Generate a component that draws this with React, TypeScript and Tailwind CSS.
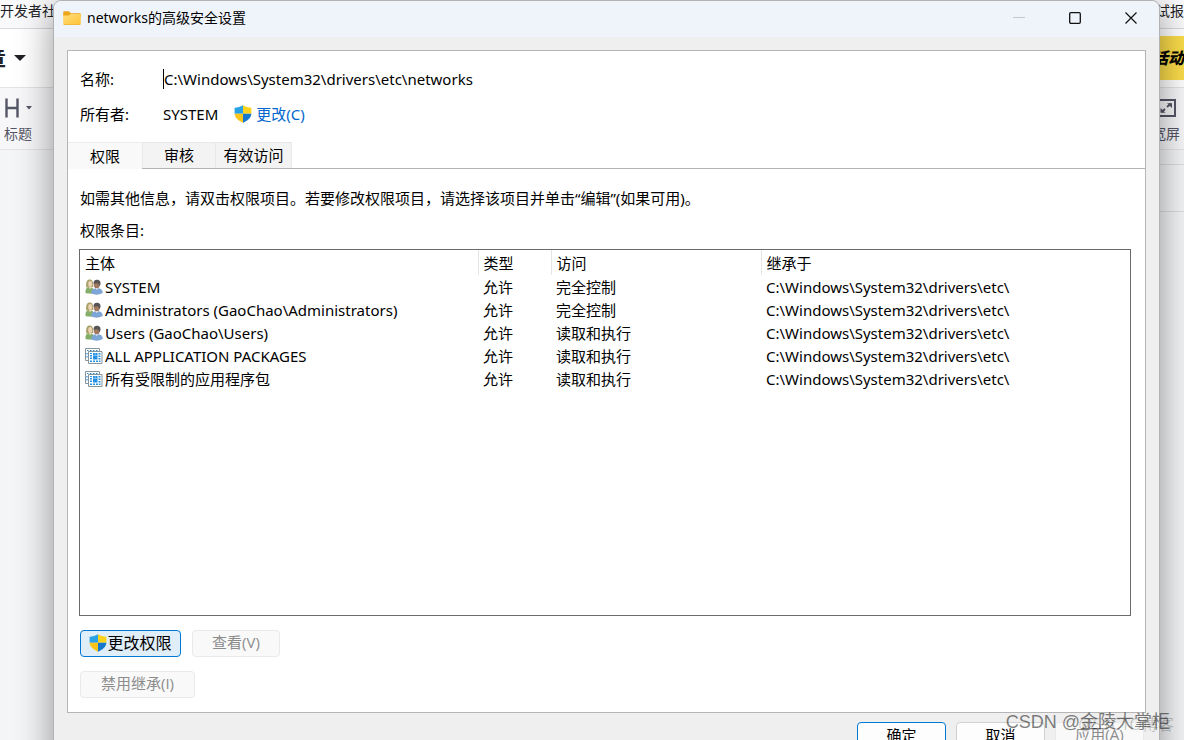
import React from "react";

const ui = "font-['Noto_Sans','Noto_Sans_CJK_SC',sans-serif]";

function Shield() {
  return (
    <svg width="18" height="18" viewBox="0 0 18 18" aria-hidden="true" className="shrink-0">
      <path d="M9 0.3 C6.4 2 3.5 2.7 0.6 2.7 L0.6 8.8 L9 8.8 Z" fill="#2aa3e6" />
      <path d="M9 0.3 C11.6 2 14.5 2.7 17.4 2.7 L17.4 8.8 L9 8.8 Z" fill="#fcd31c" />
      <path d="M0.6 8.8 C1 13 4.5 15.8 9 17.8 L9 8.8 Z" fill="#fdc51a" />
      <path d="M17.4 8.8 C17 13 13.5 15.8 9 17.8 L9 8.8 Z" fill="#1678cf" />
    </svg>
  );
}

function Folder() {
  return (
    <svg width="18" height="14" viewBox="0 0 18 14" aria-hidden="true">
      <defs>
        <linearGradient id="folder" x1="0" y1="0" x2="1" y2="1">
          <stop offset="0" stopColor="#ffdd7a" />
          <stop offset="1" stopColor="#fdc437" />
        </linearGradient>
      </defs>
      <path d="M1.3 0.2h4.6l2 2h8.8q1.1 0 1.1 1.2V6H0.2V1.4Q0.2 0.2 1.3 0.2Z" fill="#eda51c" />
      <path d="M0.2 4.6h5.6l2-1.6h9q1 0 1 1v8.6q0 1.2-1.1 1.2H1.3q-1.1 0-1.1-1.2Z" fill="url(#folder)" />
      <path d="M0.4 13h17.2q-.2.8-1 .8H1.4q-.8 0-1-.8Z" fill="#eeb02c" />
    </svg>
  );
}

function Group() {
  return (
    <svg width="18" height="16" viewBox="0 0 18 16" aria-hidden="true" className="shrink-0">
      <path d="M0.5 14C0.200 10.200 1.600 8 4.600 8S9 10 9 14Q4.600 15.200 0.500 14Z" fill="#82ae68" />
      <path d="M1.200 8.500C0.700 3 2 0.400 4.700 0.400S8.700 3 8.200 8Z" fill="#aaa06a" />
      <ellipse cx="5.200" cy="5" rx="2" ry="3" fill="#ecd4b4" />
      <path d="M3.600 8l1.400 2.600L6.600 8Z" fill="#ecd4b4" />
      <path d="M6.300 14.500C6.300 10.400 8.400 9.200 12 9.200s5.900 1.400 5.700 4.800Q12 17 6.300 14.500Z" fill="#7da5d6" />
      <ellipse cx="11.800" cy="5.400" rx="2.900" ry="4" fill="#a0785f" />
      <path d="M8.600 5C8.200 2.200 9.600 0.700 12 0.700s4 1.500 3.400 4.900l-.9 2C14.200 4.200 12 3.600 8.600 5Z" fill="#585354" />
      <path d="M10.200 9.200l1.600 1.800 1.600-1.800Z" fill="#e7eef6" />
    </svg>
  );
}

function Package() {
  return (
    <svg width="18" height="16" viewBox="0 0 18 16" aria-hidden="true" className="shrink-0">
      <path d="M0.5 0.5h14v12h-14Z" fill="#fff" stroke="#87949c" />
      <path d="M2 2.500h1.500M5 2.500h1.500M8 2.500h1.500M11 2.500h1.500M2 5v1.500M2 8v1.500" stroke="#2b8bd9" strokeWidth="1.200" />
      <path d="M3.500 3.500h13.500v12h-13.500Z" fill="#fff" stroke="#87949c" />
      <path d="M5 5h2v1H5ZM5 7h2v1.500H5ZM5 9.500h2V11H5ZM5 12.500h2V14H5ZM8 5h4.500v6.500H8ZM13.500 5h2v1.500h-2ZM13.500 7.500h2V9h-2ZM13.500 10h2v1.500h-2ZM8 12.500h2V14H8ZM11 12.500h2V14h-2ZM14 12.500h1.500V14H14Z" fill="#2490e4" />
      <path d="M10.200 5v2.500H8M10.200 7.500h2.300" stroke="#b8dcf7" strokeWidth="0.600" fill="none" />
    </svg>
  );
}

const entries = [
  { name: "SYSTEM", group: true, access: "完全控制" },
  { name: "Administrators (GaoChao\\Administrators)", group: true, access: "完全控制" },
  { name: "Users (GaoChao\\Users)", group: true, access: "读取和执行" },
  { name: "ALL APPLICATION PACKAGES", group: false, access: "读取和执行" },
  { name: "所有受限制的应用程序包", group: false, access: "读取和执行" },
];

function EditorPage() {
  return (
    <div className="flex min-h-screen flex-col bg-[#f4f5f7] text-[#222226]">
      <div className="flex h-[29px] items-center justify-between overflow-hidden border-b border-[#d9d9dc] bg-[#fafafc] pb-1.5 text-sm">
        <span>开发者社</span>
        <span>试报</span>
      </div>
      <div className="flex h-[58px] items-center justify-between overflow-hidden bg-white">
        <div className="-ml-4 flex items-center gap-2">
          <span className="text-[22px] font-bold">章</span>
          <svg width="12" height="6" viewBox="0 0 12 6" aria-hidden="true"><path d="M0 0h12L6 6Z" fill="#222226" /></svg>
        </div>
        <div className="flex h-11 w-11 items-center justify-end bg-[#fbdc4a] text-base font-black italic text-black">活动</div>
      </div>
      <div className="flex h-[63px] items-center justify-between border-y border-[#e4e4e8] bg-[#f7f7f9] text-sm text-[#555666]">
        <div className="flex flex-col gap-1.5 pl-1 pt-1">
          <div className="flex items-center gap-1.5">
            <svg width="16" height="20" viewBox="0 0 16 20" aria-hidden="true"><path d="M2.500 0.500v19M13.500 0.500v19M2.500 10h11" stroke="#555666" strokeWidth="2.400" fill="none" /></svg>
            <svg width="6" height="4" viewBox="0 0 6 4" aria-hidden="true"><path d="M0 0h6L3 3.500Z" fill="#555666" /></svg>
          </div>
          <span>标题</span>
        </div>
        <div className="flex flex-col items-end gap-1.5 pr-1 pt-1">
          <svg width="24" height="20" viewBox="0 0 24 20" aria-hidden="true" fill="none" stroke="#555666" strokeWidth="2">
            <path d="M1 2h18v16H1Z" />
            <path d="M11 9l4-3.500M9 11l-3.500 3" />
            <path d="M11 5.300h5v4.700ZM4.500 10v4.700h5Z" fill="#555666" stroke="none" />
          </svg>
          <span>宽屏</span>
        </div>
      </div>
      <div className="ml-auto h-[15px] w-1/2 border-b border-[#dcdde0]" />
      <div className="ml-auto h-[47px] w-1/2 border-b border-[#dcdde0]" />
    </div>
  );
}

const disabledButton = "h-[27px] rounded-[4px] border border-[#e9e9e9] bg-[#f9f9f9] pb-0.5 font-['Open_Sans','Noto_Sans_CJK_SC',sans-serif] text-[15px] leading-none text-[#8c8c8c]";

export default function App() {
  return (
    <div className={`relative h-screen overflow-hidden ${ui}`}>
      <EditorPage />
      <main className="absolute left-[53px] right-[24px] top-0 flex min-h-[780px] flex-col rounded-t-lg border border-[#b2b2b4] bg-[#efefef] text-[15px] leading-5 text-black shadow-[0_8px_36px_rgba(0,0,0,0.42)]">
        <header className="flex h-9 items-center rounded-t-lg bg-[#eff3fa] pb-0.5 pl-[9px]">
          <Folder />
          <h1 className="ml-1.5 text-sm">networks的高级安全设置</h1>
          <div className="ml-auto flex h-full">
            <button aria-label="最小化" disabled className="grid w-14 place-items-center">
              <svg width="12" height="12" viewBox="0 0 12 12"><path d="M0 5.500h12" stroke="#c3c6cb" /></svg>
            </button>
            <button aria-label="最大化" className="grid w-14 place-items-center">
              <svg width="12" height="12" viewBox="0 0 12 12"><rect x="0.700" y="0.700" width="10.600" height="10.600" rx="1.200" fill="none" stroke="#111" strokeWidth="1.300" /></svg>
            </button>
            <button aria-label="关闭" className="grid w-14 place-items-center">
              <svg width="12" height="12" viewBox="0 0 12 12"><path d="M0.500 0.500l11 11M11.500 0.500l-11 11" stroke="#111" strokeWidth="1.200" /></svg>
            </button>
          </div>
        </header>

        <section className="mx-[13px] mt-[13px] border border-[#b5b5b5] bg-white">
          <dl className="grid grid-cols-[83px_1fr] gap-y-[15px] pl-3 pt-[18px]">
            <dt>名称:</dt>
            <dd className="border-l border-black">C:\Windows\System32\drivers\etc\networks</dd>
            <dt>所有者:</dt>
            <dd className="flex items-center">
              SYSTEM
              <a href="#change" className="ml-4 flex items-center gap-1 text-[#0066cc]"><Shield />更改(C)</a>
            </dd>
          </dl>

          <div role="tablist" className="mt-[18px] flex h-[27px] border-b border-[#b5b5b5]">
            <button role="tab" aria-selected="true" className="-mb-px w-[74px] border-t border-[#ececec] bg-[#f9f9f9]">权限</button>
            <button role="tab" aria-selected="false" className="w-[74px] border border-b-0 border-[#e8e8e8] bg-[#f3f3f3] pb-0.5">审核</button>
            <button role="tab" aria-selected="false" className="w-[76px] border border-b-0 border-l-0 border-[#e8e8e8] bg-[#f3f3f3] pb-0.5">有效访问</button>
          </div>

          <div className="pb-[14px] pl-[11px] pr-[14px] pt-[19px]">
            <p className="pl-px">如需其他信息，请双击权限项目。若要修改权限项目，请选择该项目并单击“编辑”(如果可用)。</p>
            <p className="mt-3 pl-px">权限条目:</p>
            <div className="mt-[9px] min-h-[367px] border border-[#6a6a6a]">
              <table className="w-full table-fixed border-collapse text-left">
                <colgroup>
                  <col className="w-[398px]" />
                  <col className="w-[73px]" />
                  <col className="w-[210px]" />
                  <col />
                </colgroup>
                <thead>
                  <tr className="h-[25px]">
                    <th className="border-r border-[#e5e5e5] pl-[5px] font-normal">主体</th>
                    <th className="border-r border-[#e5e5e5] pl-[5px] font-normal">类型</th>
                    <th className="border-r border-[#e5e5e5] pl-[5px] font-normal">访问</th>
                    <th className="pl-[5px] font-normal">继承于</th>
                  </tr>
                </thead>
                <tbody>
                  {entries.map((e) => (
                    <tr key={e.name} className="h-[23px]">
                      <td className="pl-[5px]"><span className="flex items-center gap-0.5">{e.group ? <Group /> : <Package />}{e.name}</span></td>
                      <td className="pl-[5px]">允许</td>
                      <td className="pl-[5px]">{e.access}</td>
                      <td className="pl-[5px]">C:\Windows\System32\drivers\etc\</td>
                    </tr>
                  ))}
                </tbody>
              </table>
            </div>
            <div className="mt-[14px] flex gap-[11px] pl-px">
              <button className="flex h-[27px] w-[101px] items-center justify-center rounded-[4px] border border-[#0078d4] bg-[#e0eef9] pb-0.5 text-base"><Shield />更改权限</button>
              <button disabled className={`w-[88px] ${disabledButton}`}>查看(V)</button>
            </div>
            <div className="mt-[14px] flex pl-px">
              <button disabled className={`w-[115px] ${disabledButton}`}>禁用继承(I)</button>
            </div>
          </div>
        </section>

        <footer className="mt-[9px] flex justify-end gap-[10px] pr-[15px]">
          <button className="h-[27px] w-[89px] rounded-[4px] border border-[#0078d4] bg-[#fdfdfd] pb-0.5">确定</button>
          <button className="h-[27px] w-[89px] rounded-[4px] border border-[#d0d0d0] bg-[#fdfdfd] pb-0.5">取消</button>
          <button disabled className={`w-[89px] ${disabledButton}`}>应用(A)</button>
        </footer>
      </main>
      <div className="absolute bottom-1 right-2.5 whitespace-nowrap text-base text-black/20">@51CTO博客</div>
      <div className="absolute bottom-1 right-3.5 whitespace-nowrap font-['Liberation_Sans','Noto_Sans_CJK_SC',sans-serif] text-lg text-black/50">CSDN @金陵大掌柜</div>
    </div>
  );
}
